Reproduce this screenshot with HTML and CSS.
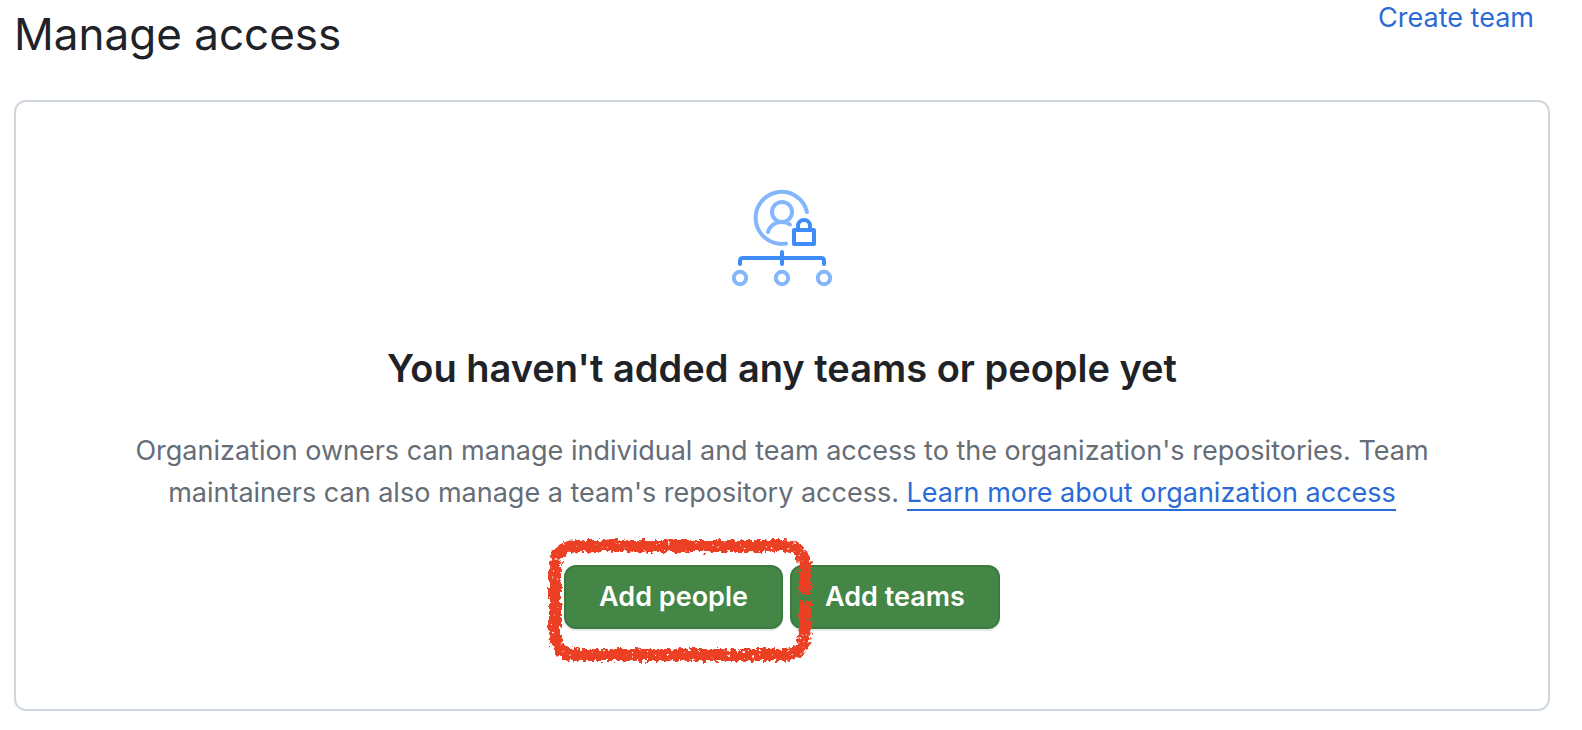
FILE: index.html
```html
<!DOCTYPE html>
<html lang="en">
<head>
<meta charset="utf-8">
<title>Manage access</title>
<link rel="stylesheet" href="styles.css">
</head>
<body>
<main class="page">
  <header class="page-header">
    <h1 class="page-title">Manage access</h1>
    <a class="create-link" href="#">Create team</a>
  </header>
  <section class="blankslate">
    <svg class="blankslate-icon" viewBox="0 0 104 100" fill="none" stroke-width="4" stroke-linecap="round" stroke-linejoin="round" aria-hidden="true">
      <g stroke="#84b6fb">
        <path d="M77 24A26 26 0 1 0 56 55.500"/>
        <circle cx="52" cy="24" r="10"/>
        <path d="M38 44C40 37 46 34 52 34C55 34 58 35 60 36.500"/>
        <circle cx="10" cy="90" r="6.200"/>
        <circle cx="52" cy="90" r="6.200"/>
        <circle cx="94" cy="90" r="6.200"/>
      </g>
      <g stroke="#3f8bf8">
        <rect x="64" y="42" width="20" height="14"/>
        <path d="M68 41V38A6 6 0 0 1 80 38V41"/>
        <path d="M10 76V73Q10 70 13 70H91Q94 70 94 73V76M52 64V76"/>
      </g>
    </svg>
    <h2 class="blankslate-title">You haven't added any teams or people yet</h2>
    <p class="blankslate-text">Organization owners can manage individual and team access to the organization's repositories. Team maintainers can also manage a team's repository access. <a class="learn-link" href="#">Learn more about organization access</a></p>
    <div class="actions">
      <div class="marked">
        <button class="btn" type="button">Add people</button>
        <svg class="marker" viewBox="0 0 272 132" fill="none" stroke="#ec4025" aria-hidden="true">
          <defs>
            <filter id="crayon" x="0" y="0" width="272" height="132" filterUnits="userSpaceOnUse" color-interpolation-filters="sRGB">
              <feTurbulence type="fractalNoise" baseFrequency="0.25" numOctaves="2" seed="4" result="noise"/>
              <feDisplacementMap in="SourceGraphic" in2="noise" scale="9" xChannelSelector="R" yChannelSelector="G" result="rough"/>
              <feColorMatrix in="noise" type="matrix" values="0 0 0 0 0  0 0 0 0 0  0 0 0 0 0  0 0 10 0 -2" result="flecks"/>
              <feComposite in="rough" in2="flecks" operator="in"/>
            </filter>
          </defs>
          <g filter="url(#crayon)">
            <path stroke-width="12" d="M262 61V34Q262 12 240 12H34Q12 12 12 34V98Q12 121 34 121H240Q262 121 262 98V67"/>
          </g>
        </svg>
      </div>
      <button class="btn" type="button">Add teams</button>
    </div>
  </section>
</main>
</body>
</html>
```

FILE: styles.css
```css
* {
  box-sizing: border-box;
}

body {
  margin: 0;
  background: #fff;
  color: #1f2328;
  font-family: Inter, "Liberation Sans", sans-serif;
  font-size: 27px;
  line-height: 42px;
}

.page {
  padding: 0 32px 18px 14px;
}

.page-header {
  display: flex;
  justify-content: space-between;
  align-items: flex-start;
  padding-right: 16px;
  height: 100px;
}

.page-title {
  margin: 0;
  font-size: 44px;
  font-weight: 400;
  line-height: 68px;
}

.create-link {
  color: #2a6bd8;
  line-height: 36px;
  text-decoration: none;
}

.blankslate {
  display: flex;
  flex-direction: column;
  align-items: center;
  padding: 86px 96px 80px;
  border: 2px solid #d0d7de;
  border-radius: 12px;
  text-align: center;
}

.blankslate-icon {
  width: 104px;
  height: 100px;
}

.blankslate-title {
  margin: 50px 0 0;
  font-size: 38px;
  font-weight: 600;
  line-height: 60px;
}

.blankslate-text {
  margin: 32px 0 0;
  color: #656d76;
}

.learn-link {
  color: #2a6bd8;
  border-bottom: 2px solid #2a6bd8;
  text-decoration: none;
}

.actions {
  display: flex;
  gap: 7px;
  margin-top: 51px;
}

.marked {
  position: relative;
}

.marker {
  position: absolute;
  top: -31px;
  left: -21px;
  width: 272px;
  height: 132px;
  pointer-events: none;
  z-index: 1;
}

.btn {
  display: block;
  padding: 0 33px;
  height: 64px;
  border: 2px solid #3c7a40;
  border-radius: 12px;
  background: #448646;
  box-shadow: 0 2px 0 #1f23281a;
  color: #fff;
  font-family: inherit;
  font-size: 27px;
  font-weight: 600;
  line-height: 40px;
}
```
